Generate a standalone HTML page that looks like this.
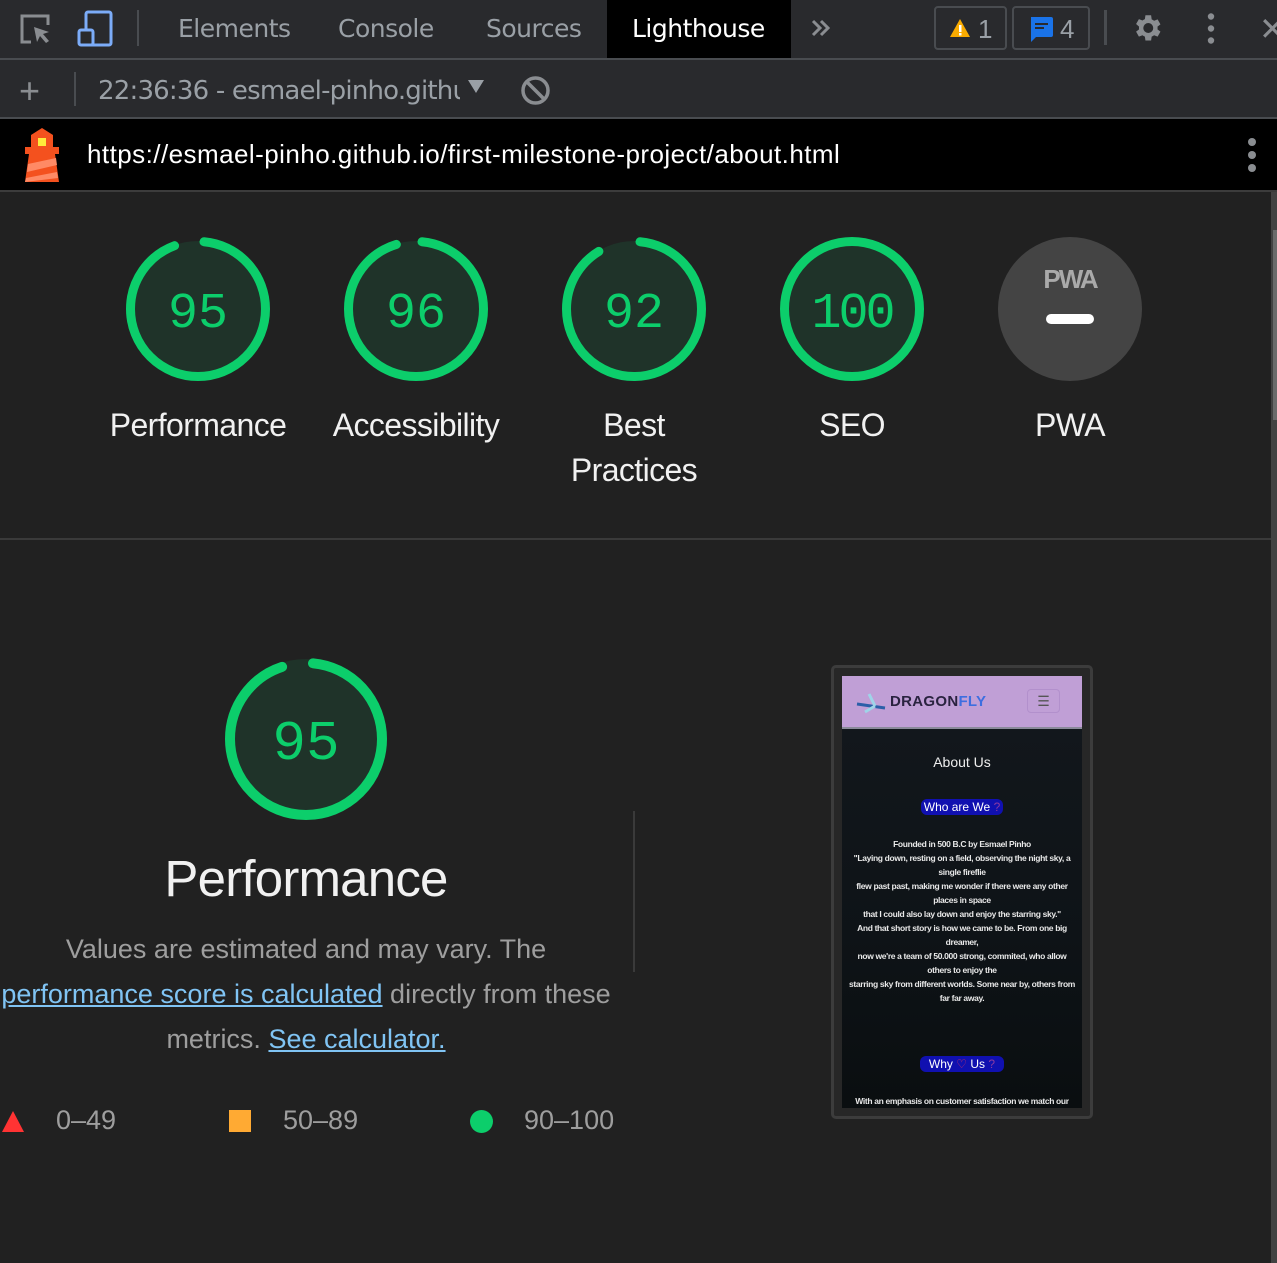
<!DOCTYPE html>
<html><head><meta charset="utf-8"><style>
*{margin:0;padding:0;box-sizing:border-box}
body{width:1277px;height:1263px;background:#212121;font-family:"Liberation Sans",Arial,sans-serif;position:relative;overflow:hidden}
.a{position:absolute}
.tab{position:absolute;top:14px;font-size:25px;color:#9aa0a6;font-family:"DejaVu Sans","Liberation Sans",sans-serif;letter-spacing:-0.5px}
.lbl{position:absolute;color:#f1f1f1;font-size:32px;text-align:center;width:220px;letter-spacing:-0.6px;line-height:45px}
.num{font-family:"Liberation Mono",monospace;fill:#0cce6b}
.sl{position:absolute;left:842px;width:240px;text-align:center;color:#e8e8e8;font-size:8.5px;font-weight:bold;letter-spacing:-0.35px;white-space:nowrap}
</style></head><body>
<div class="a" style="left:0;top:0;width:1277px;height:58px;background:#292a2d"></div>
<div class="a" style="left:0;top:58px;width:1277px;height:2px;background:#494c50"></div>
<div class="a" style="left:607px;top:0;width:184px;height:58px;background:#000"></div>
<svg class="a" style="left:18px;top:12px" width="36" height="36" viewBox="0 0 36 36"><path d="M13 30H4V4h26v9" fill="none" stroke="#8a8d91" stroke-width="3"/><path d="M16 15l15 5-6 2 6 7-3 2-6-7-3 6z" fill="#8a8d91"/></svg>
<svg class="a" style="left:76px;top:10px" width="38" height="38" viewBox="0 0 38 38"><rect x="10" y="2" width="25" height="33" rx="2" fill="none" stroke="#7cacf8" stroke-width="3"/><rect x="3" y="20" width="14" height="15" rx="2" fill="#292a2d" stroke="#7cacf8" stroke-width="3"/></svg>
<div class="a" style="left:137px;top:10px;width:2px;height:36px;background:#494c50"></div>
<div class="tab" style="left:178px">Elements</div>
<div class="tab" style="left:338px">Console</div>
<div class="tab" style="left:486px">Sources</div>
<div class="tab" style="left:632px;color:#fff">Lighthouse</div>
<svg class="a" style="left:810px;top:18px" width="22" height="20" viewBox="0 0 22 20"><path d="M3 3l7 7-7 7M11 3l7 7-7 7" fill="none" stroke="#8a8d91" stroke-width="3"/></svg>
<div class="a" style="left:934px;top:6px;width:73px;height:44px;border:2px solid #494c50;border-radius:4px"></div>
<svg class="a" style="left:949px;top:17px" width="22" height="22" viewBox="0 0 22 22"><path d="M11 2L21 20H1z" fill="#f9ab00"/><rect x="10" y="8" width="2.5" height="7" fill="#fff"/><rect x="10" y="16" width="2.5" height="2.5" fill="#fff"/></svg>
<div class="a" style="left:978px;top:14px;color:#9aa0a6;font-size:26px">1</div>
<div class="a" style="left:1012px;top:6px;width:78px;height:44px;border:2px solid #494c50;border-radius:4px"></div>
<svg class="a" style="left:1028px;top:16px" width="26" height="26" viewBox="0 0 26 26"><path d="M3 1h20a2 2 0 0 1 2 2v16a2 2 0 0 1-2 2H8l-5 5z" fill="#1a73e8"/><rect x="7" y="7" width="13" height="2" fill="#292a2d"/><rect x="7" y="11" width="9" height="2" fill="#292a2d"/></svg>
<div class="a" style="left:1060px;top:14px;color:#9aa0a6;font-size:26px">4</div>
<div class="a" style="left:1104px;top:10px;width:3px;height:35px;background:#494c50"></div>
<svg class="a" style="left:1130px;top:11px" width="34" height="34" viewBox="0 0 24 24"><path fill="#8a8d91" d="M19.4 13a7.5 7.5 0 0 0 0-2l2.1-1.6-2-3.5-2.5 1a7 7 0 0 0-1.7-1L14.9 3h-4l-.4 2.7a7 7 0 0 0-1.7 1l-2.5-1-2 3.5L6.4 11a7.5 7.5 0 0 0 0 2l-2.1 1.6 2 3.5 2.5-1a7 7 0 0 0 1.7 1l.4 2.7h4l.4-2.7a7 7 0 0 0 1.7-1l2.5 1 2-3.5zM12.9 15.5a3.5 3.5 0 1 1 0-7 3.5 3.5 0 0 1 0 7z"/></svg>
<svg class="a" style="left:1204px;top:13px" width="14" height="32"><circle cx="7" cy="3.5" r="3.2" fill="#8a8d91"/><circle cx="7" cy="15.5" r="3.2" fill="#8a8d91"/><circle cx="7" cy="27.5" r="3.2" fill="#8a8d91"/></svg>
<div class="a" style="left:1259px;top:10px;color:#8a8d91;font-size:32px">✕</div>
<div class="a" style="left:0;top:60px;width:1277px;height:58px;background:#292a2d"></div>
<div class="a" style="left:0;top:117px;width:1277px;height:2px;background:#494c50"></div>
<div class="a" style="left:19px;top:70px;color:#8a8d91;font-size:36px;font-weight:300">+</div>
<div class="a" style="left:74px;top:72px;width:2px;height:34px;background:#494c50"></div>
<div class="a" style="left:98px;top:76px;color:#9aa0a6;font-size:26px;font-family:'DejaVu Sans',sans-serif;letter-spacing:-0.8px;width:362px;overflow:hidden;white-space:nowrap">22:36:36 - esmael-pinho.github.io</div>
<div class="a" style="left:468px;top:80px;width:0;height:0;border-left:8px solid transparent;border-right:8px solid transparent;border-top:13px solid #9aa0a6"></div>
<svg class="a" style="left:520px;top:75px" width="31" height="31" viewBox="0 0 31 31"><circle cx="15.5" cy="15.5" r="12.5" fill="none" stroke="#8a8d91" stroke-width="3.5"/><path d="M7 7l17 17" stroke="#8a8d91" stroke-width="3.5"/></svg>
<div class="a" style="left:0;top:119px;width:1277px;height:71px;background:#000"></div>
<div class="a" style="left:0;top:190px;width:1277px;height:2px;background:#3c3c3c"></div>
<svg class="a" style="left:22px;top:126px" width="40" height="58" viewBox="22 126 40 58"><path d="M42 128l11 7v13H31v-13z" fill="#f4511e"/><rect x="38" y="138" width="8" height="8" fill="#ffeb3b"/><rect x="25" y="147" width="34" height="7" fill="#f4511e"/><path d="M29 154h26l4 28H25z" fill="#f4511e"/><path d="M28 164l28-6 1 7-30 7zM26 178l31-6 1 6-33 4z" fill="#ff8a65"/></svg>
<div class="a" style="left:87px;top:139px;color:#fff;font-size:26px;letter-spacing:0.45px">https://esmael-pinho.github.io/first-milestone-project/about.html</div>
<svg class="a" style="left:1245px;top:136px" width="14" height="38"><circle cx="7" cy="6" r="4" fill="#8a8d91"/><circle cx="7" cy="19" r="4" fill="#8a8d91"/><circle cx="7" cy="32" r="4" fill="#8a8d91"/></svg>
<div class="a" style="left:1271px;top:192px;width:6px;height:1071px;background:#424242"></div>
<div class="a" style="left:1273px;top:230px;width:4px;height:190px;background:#6a6a6a"></div>
<svg class="a" style="left:0;top:192px" width="1270" height="345">
<g transform="translate(198,117) rotate(-90)"><circle r="68" fill="#1f3329"/><circle r="67.5" fill="none" stroke="#0cce6b" stroke-width="9" stroke-linecap="round" stroke-dasharray="394 500" stroke-dashoffset="-6"/></g>
<g transform="translate(416,117) rotate(-90)"><circle r="68" fill="#1f3329"/><circle r="67.5" fill="none" stroke="#0cce6b" stroke-width="9" stroke-linecap="round" stroke-dasharray="398 500" stroke-dashoffset="-6"/></g>
<g transform="translate(634,117) rotate(-90)"><circle r="68" fill="#1f3329"/><circle r="67.5" fill="none" stroke="#0cce6b" stroke-width="9" stroke-linecap="round" stroke-dasharray="381 500" stroke-dashoffset="-6"/></g>
<g transform="translate(852,117)"><circle r="68" fill="#1f3329"/><circle r="67.5" fill="none" stroke="#0cce6b" stroke-width="9"/></g>
<circle cx="1070" cy="117" r="72" fill="#444"/>
<text class="num" x="198" y="135" font-size="50" text-anchor="middle">95</text>
<text class="num" x="416" y="135" font-size="50" text-anchor="middle">96</text>
<text class="num" x="634" y="135" font-size="50" text-anchor="middle">92</text>
<text class="num" x="852" y="135" font-size="50" text-anchor="middle" letter-spacing="-3">100</text>
<text x="1070" y="96" font-size="26" font-weight="bold" fill="#aaa" text-anchor="middle" font-family="Liberation Sans" letter-spacing="-2">PWA</text>
<rect x="1046" y="122" width="48" height="10" rx="5" fill="#fff"/>
</svg>
<div class="lbl" style="left:88px;top:403px">Performance</div>
<div class="lbl" style="left:306px;top:403px">Accessibility</div>
<div class="lbl" style="left:524px;top:403px">Best<br>Practices</div>
<div class="lbl" style="left:742px;top:403px">SEO</div>
<div class="lbl" style="left:960px;top:403px">PWA</div>
<div class="a" style="left:0;top:538px;width:1271px;height:2px;background:#3a3a3a"></div>
<svg class="a" style="left:220px;top:652px" width="172" height="172">
<g transform="translate(86,87) rotate(-90)"><circle r="80" fill="#1f3329"/><circle r="76" fill="none" stroke="#0cce6b" stroke-width="10" stroke-linecap="round" stroke-dasharray="446 500" stroke-dashoffset="-7"/></g>
<text class="num" x="86" y="107" font-size="56" text-anchor="middle">95</text>
</svg>
<div class="a" style="left:0;top:849px;width:612px;text-align:center;color:#f1f1f1;font-size:51px;letter-spacing:-0.8px">Performance</div>
<div class="a" style="left:-10px;top:927px;width:632px;text-align:center;color:#9e9e9e;font-size:27px;line-height:45px;letter-spacing:0px">Values are estimated and may vary. The<br><span style="color:#80c4f4;text-decoration:underline">performance score is calculated</span> directly from these<br>metrics. <span style="color:#80c4f4;text-decoration:underline">See calculator.</span></div>
<div class="a" style="left:633px;top:811px;width:2px;height:161px;background:#3a3a3a"></div>
<div class="a" style="left:2px;top:1111px;width:0;height:0;border-left:11px solid transparent;border-right:11px solid transparent;border-bottom:21px solid #ff3333"></div>
<div class="a" style="left:56px;top:1105px;color:#9e9e9e;font-size:27px">0–49</div>
<div class="a" style="left:229px;top:1110px;width:22px;height:22px;background:#ffaa33"></div>
<div class="a" style="left:283px;top:1105px;color:#9e9e9e;font-size:27px">50–89</div>
<div class="a" style="left:470px;top:1110px;width:23px;height:23px;border-radius:50%;background:#0cce6b"></div>
<div class="a" style="left:524px;top:1105px;color:#9e9e9e;font-size:27px">90–100</div>
<div class="a" style="left:831px;top:665px;width:262px;height:454px;border:3px solid #3c3c3c;border-radius:5px;background:#272727"></div>
<div class="a" style="left:842px;top:676px;width:240px;height:432px;background:linear-gradient(#13181d,#0e1317 60%,#0a0e10)"></div>
<div class="a" style="left:842px;top:676px;width:240px;height:51px;background:#c09fd6"></div>
<div class="a" style="left:842px;top:727px;width:240px;height:2px;background:#8a8a9a"></div>
<svg class="a" style="left:855px;top:690px" width="32" height="26"><path d="M2 14l28 4" stroke="#2b5fa8" stroke-width="3"/><path d="M14 4l6 12M10 22l10-6" stroke="#9fd4e8" stroke-width="3"/></svg>
<div class="a" style="left:890px;top:693px;font-size:15px;font-weight:bold;letter-spacing:0.3px;color:#2a2340">DRAGON<span style="color:#3d6ee0">FLY</span></div>
<div class="a" style="left:1027px;top:689px;width:33px;height:24px;border:1px solid #b290cc;border-radius:4px;color:#555;font-size:14px;text-align:center;line-height:22px">☰</div>
<div class="a" style="left:842px;top:754px;width:240px;text-align:center;color:#eee;font-size:14px">About Us</div>
<div class="a" style="left:921px;top:799px;width:82px;height:16px;background:#1010b0;border-radius:6px;color:#fff;font-size:12px;text-align:center;line-height:16px">Who are We <span style="color:#8a3aa0">?</span></div>
<div class="sl" style="top:839px">Founded in 500 B.C by Esmael Pinho</div>
<div class="sl" style="top:853px">"Laying down, resting on a field, observing the night sky, a</div>
<div class="sl" style="top:867px">single fireflie</div>
<div class="sl" style="top:881px">flew past past, making me wonder if there were any other</div>
<div class="sl" style="top:895px">places in space</div>
<div class="sl" style="top:909px">that I could also lay down and enjoy the starring sky."</div>
<div class="sl" style="top:923px">And that short story is how we came to be. From one big</div>
<div class="sl" style="top:937px">dreamer,</div>
<div class="sl" style="top:951px">now we're a team of 50.000 strong, commited, who allow</div>
<div class="sl" style="top:965px">others to enjoy the</div>
<div class="sl" style="top:979px">starring sky from different worlds. Some near by, others from</div>
<div class="sl" style="top:993px">far far away.</div>
<div class="a" style="left:920px;top:1056px;width:84px;height:16px;background:#1010b0;border-radius:6px;color:#fff;font-size:12px;text-align:center;line-height:16px">Why <span style="color:#c0306a">♡</span> Us <span style="color:#8a3aa0">?</span></div>
<div class="sl" style="top:1096px">With an emphasis on customer satisfaction we match our</div>
</body></html>
